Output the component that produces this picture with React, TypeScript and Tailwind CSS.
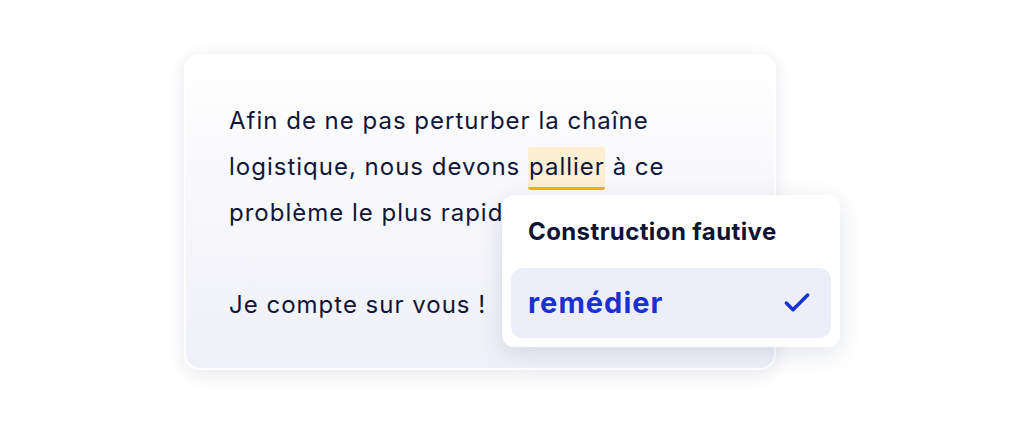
import { Check } from "lucide-react";

const App = () => {
  return (
    <div className="w-[1024px] h-[424px] bg-white pl-[184px] pt-[54px] font-['Inter','Noto_Sans',sans-serif]">
      {/* Text card */}
      <div className="relative w-[592px] h-[316px] rounded-2xl border-2 border-white bg-gradient-to-b from-white to-[#eff0f7] shadow-[0_4px_18px_rgba(20,30,80,0.10)] pl-[43px] pt-[42px]">
        <p className="text-[24px] leading-[46px] tracking-[1px] text-[#111639]">
          Afin de ne pas perturber la chaîne
          <br />
          logistique, nous devons{" "}
          <span className="inline-block leading-[40px] bg-[#fdf0d2] rounded-[3px] border-b-[3px] border-[#fbb000] pl-px">
            pallier
          </span>{" "}
          à ce
          <br />
          problème le plus rapidement possible.
          <br />
          <br />
          Je compte sur vous !
        </p>

        {/* Suggestion popup */}
        <div className="absolute left-[316px] top-[139px] w-[338px] h-[152px] rounded-xl bg-white shadow-[0_6px_24px_rgba(20,30,80,0.12)] px-[9px] pt-[22px]">
          <div className="pl-[17px] text-[24px] leading-[30px] tracking-[0.4px] font-bold text-[#0e1433]">
            Construction fautive
          </div>
          <div className="mt-[21px] h-[70px] rounded-xl bg-[#eceff9] flex items-center justify-between pl-[17px] pr-[18px]">
            <span className="text-[29px] tracking-[1px] font-bold text-[#1a30d0]">remédier</span>
            <Check className="w-8 h-8 text-[#1a30d0]" strokeWidth={2.6} />
          </div>
        </div>
      </div>
    </div>
  );
};

export default App;
